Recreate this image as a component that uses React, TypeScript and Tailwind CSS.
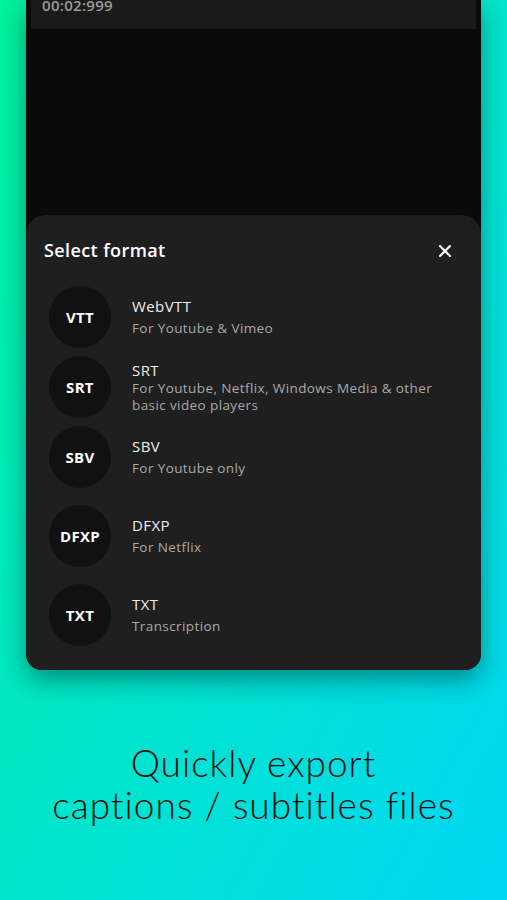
import { X } from "lucide-react";

// Export sheet mock — phone frame with a "Select format" bottom sheet
// sitting on a green → cyan gradient, caption text underneath.

type Format = {
  badge: string;
  name: string;
  lines: string[];
  mt: string;
  gap: string;
};

const formats: Format[] = [
  { badge: "VTT", name: "WebVTT", lines: ["For Youtube & Vimeo"], mt: "mt-0", gap: "gap-[5px]" },
  {
    badge: "SRT",
    name: "SRT",
    lines: ["For Youtube, Netflix, Windows Media & other", "basic video players"],
    mt: "mt-[8px]",
    gap: "gap-px",
  },
  { badge: "SBV", name: "SBV", lines: ["For Youtube only"], mt: "mt-[8px]", gap: "gap-[5px]" },
  { badge: "DFXP", name: "DFXP", lines: ["For Netflix"], mt: "mt-[17px]", gap: "gap-[5px]" },
  { badge: "TXT", name: "TXT", lines: ["Transcription"], mt: "mt-[17px]", gap: "gap-[5px]" },
];

export default function App() {
  return (
    <div
      className="w-[507px] h-[900px] overflow-hidden bg-linear-to-br from-[#00f29c] to-[#00d6f2] flex flex-col items-center"
      style={{ fontFamily: '"Open Sans", "Noto Sans", sans-serif' }}
    >
      <div className="w-[455px] h-[670px] bg-[#0a0a0a] rounded-b-[16px] flex flex-col shadow-[0_10px_24px_rgba(0,40,40,0.45)]">
        {/* timestamp strip, cut off by the top of the shot */}
        <div className="mx-[5px] h-[29px] bg-[#1a1a1a] overflow-hidden">
          <div className="-mt-[4px] pl-[11px] text-[15px] font-semibold text-[#9a9a9a] leading-[18px] tracking-[0.3px]">
            00:02:999
          </div>
        </div>

        <div className="flex-1" />

        <div className="h-[455px] bg-[#1f1f1f] rounded-t-[20px] rounded-b-[16px] flex flex-col">
          <div className="h-[71px] flex items-center justify-between pl-[18px] pr-[26px]">
            <span className="text-[18px] font-semibold text-white tracking-[0.4px]">Select format</span>
            <X className="w-[20px] h-[20px] text-white" strokeWidth={2.5} />
          </div>

          <div className="flex flex-col pl-[23px]">
            {formats.map((f) => (
              <div key={f.badge} className={"flex items-center " + f.mt}>
                <div className="w-[62px] h-[62px] rounded-full bg-[#111111] flex items-center justify-center shrink-0">
                  <span className="text-[15px] font-bold text-white tracking-[0.3px]">{f.badge}</span>
                </div>
                <div className={"ml-[21px] flex flex-col " + f.gap}>
                  <span className="text-[15px] leading-[18px] text-[#eeeeee] tracking-[0.4px]">{f.name}</span>
                  <div className="flex flex-col">
                    {f.lines.map((l) => (
                      <span key={l} className="text-[13.5px] leading-[17px] text-[#a9a9a9] tracking-[0.4px]">
                        {l}
                      </span>
                    ))}
                  </div>
                </div>
              </div>
            ))}
          </div>
        </div>
      </div>

      <div
        className="mt-[72px] text-center text-[37px] leading-[42px] font-light text-[#0a0e10] tracking-[1px]"
        style={{ fontFamily: 'Lato, "Open Sans", sans-serif' }}
      >
        Quickly export
        <br />
        captions / subtitles files
      </div>
    </div>
  );
}
